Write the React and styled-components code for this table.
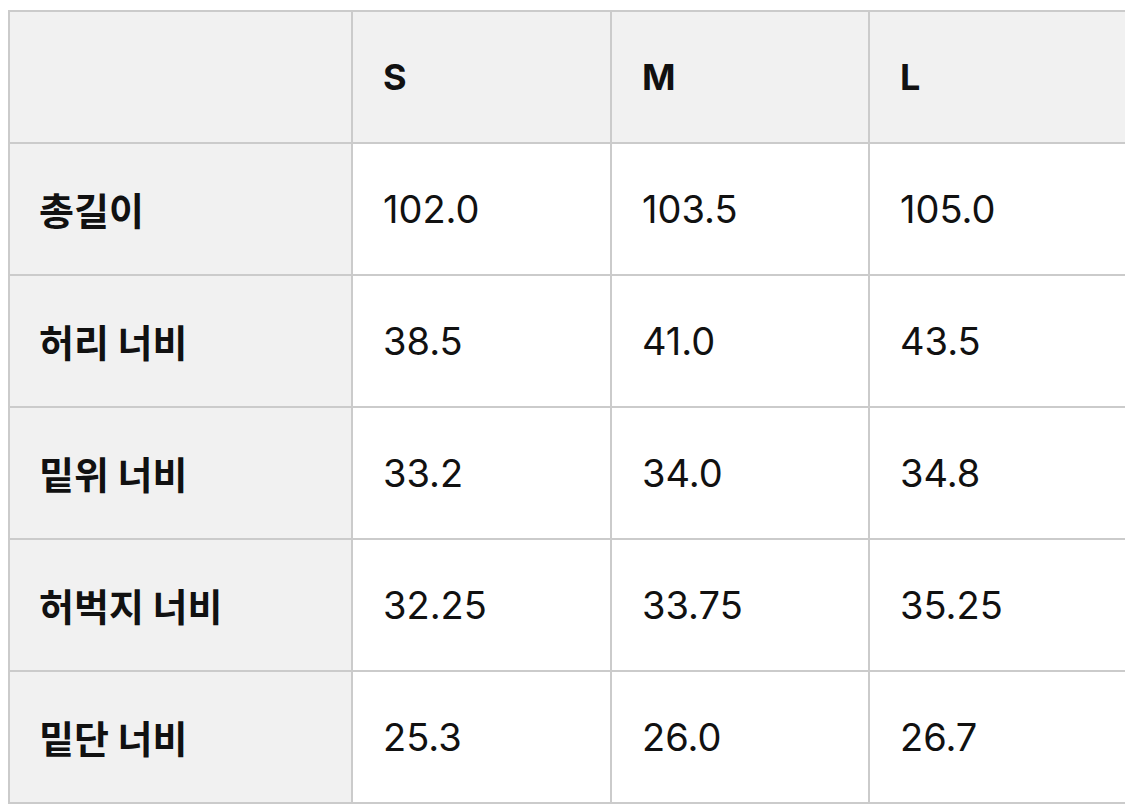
import styled, { createGlobalStyle } from "styled-components";

const GlobalStyle = createGlobalStyle`
  body {
    margin: 10px 0 0 8px;
    background: #ffffff;
    font-family: Inter, "Noto Sans CJK KR", sans-serif;
    color: #111111;
  }
`;

const sizes = ["S", "M", "L"];
const colWidths = [343, 259, 258, 257];

const rows = [
  { label: "총길이", values: ["102.0", "103.5", "105.0"] },
  { label: "허리 너비", values: ["38.5", "41.0", "43.5"] },
  { label: "밑위 너비", values: ["33.2", "34.0", "34.8"] },
  { label: "허벅지 너비", values: ["32.25", "33.75", "35.25"] },
  { label: "밑단 너비", values: ["25.3", "26.0", "26.7"] },
];

const App = () => {
  return (
    <>
      <GlobalStyle />
      <Table>
        <colgroup>
          {colWidths.map((w, i) => (
            <Col key={i} $width={w} />
          ))}
        </colgroup>
        <thead>
          <tr>
            <HeadCell />
            {sizes.map((s) => (
              <HeadCell key={s}>{s}</HeadCell>
            ))}
          </tr>
        </thead>
        <tbody>
          {rows.map((row) => (
            <tr key={row.label}>
              <LabelCell>{row.label}</LabelCell>
              {row.values.map((v, i) => (
                <ValueCell key={i}>{v}</ValueCell>
              ))}
            </tr>
          ))}
        </tbody>
      </Table>
    </>
  );
};

const Table = styled.table`
  width: 1117px;
  table-layout: fixed;
  border-collapse: collapse;
  border: 2px solid #d2d2d2;
`;

const Col = styled.col`
  width: ${({ $width }) => $width}px;
`;

const Cell = styled.td`
  height: 130px;
  padding: 0 0 0 30px;
  border: 2px solid #cbcbcb;
  text-align: left;
  vertical-align: middle;
  font-size: 38px;
  line-height: 1;
  color: #111111;
`;

const HeadCell = styled(Cell).attrs({ as: "th" })`
  background: #f1f1f1;
  font-weight: 700;
  font-size: 36px;
`;

const LabelCell = styled(Cell)`
  padding-left: 29px;
  background: #f1f1f1;
  font-family: "Noto Sans CJK KR", sans-serif;
  font-weight: 700;
  font-size: 38px;
`;

const ValueCell = styled(Cell)`
  background: #ffffff;
  font-weight: 400;
`;

export default App;
